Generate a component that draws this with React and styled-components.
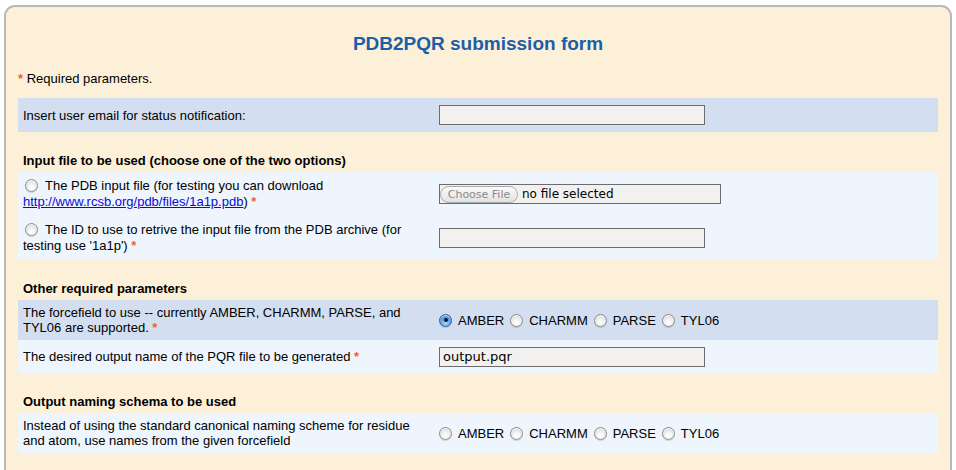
import React from 'react'
import styled, { createGlobalStyle } from 'styled-components'

const Global = createGlobalStyle`
    html, body {
        margin: 0;
        padding: 0;
        background: #ffffff;
    }
    body {
        font-family: "Liberation Sans", Arial, sans-serif;
        font-size: 13px;
        color: #000;
    }
`

const Panel = styled.div`
    box-sizing: border-box;
    width: 948px;
    min-height: 480px;
    margin: 5px 0 0 4px;
    padding: 26px 12px 20px 12px;
    background: #fcf1d8;
    border: 2px solid #b9b9b9;
    border-radius: 11px;
`

const Title = styled.h1`
    margin: 0;
    text-align: center;
    color: #1c5ea8;
    font-size: 19px;
    line-height: 22px;
    font-weight: bold;
`

const Note = styled.div`
    margin: 16px 0 12px 0;
    line-height: 15px;
`

const Star = styled.span`
    color: #f0622a;
    font-weight: bold;
`

const SectionHead = styled.div`
    padding: 21px 5px 4px 5px;
    font-weight: bold;
    line-height: 15px;
`

const Row = styled.div`
    display: grid;
    grid-template-columns: 416px 1fr;
    align-items: center;
    min-height: ${p => p.$h}px;
    background: ${p => (p.$dark ? '#d3dff0' : '#eef5fd')};
`

const Label = styled.div`
    padding: 0 5px;
    line-height: ${p => (p.$lh ? p.$lh : 15)}px;
`

const Field = styled.div`
    padding: 0 5px;
    display: flex;
    align-items: center;
`

const TextInput = styled.input`
    box-sizing: border-box;
    width: ${p => p.$w || 266}px;
    height: 20px;
    margin: 0;
    padding: 1px 3px;
    border: 1px solid #6c6c6c;
    background: #f2f1ef;
    font-family: "DejaVu Sans", sans-serif;
    font-size: 13px;
    color: #000;
    outline: none;
`

const FileBox = styled.div`
    box-sizing: border-box;
    width: 282px;
    height: 20px;
    border: 1px solid #6c6c6c;
    background: #f2f1ef;
    display: flex;
    align-items: center;
    gap: 4px;
    font-family: "DejaVu Sans", sans-serif;
    font-size: 12px;
`

const FileButton = styled.span`
    box-sizing: border-box;
    height: 17px;
    width: 78px;
    border: 1px solid #aaa;
    border-radius: 9px;
    background: linear-gradient(#fbfbfb, #e2e2e2);
    color: #8a8a8a;
    font-size: 11px;
    display: flex;
    align-items: center;
    justify-content: center;
`

const Radio = styled.input.attrs({ type: 'radio' })`
    appearance: none;
    -webkit-appearance: none;
    box-sizing: border-box;
    width: 13px;
    height: 13px;
    margin: ${p => p.$m || '0 6px 0 0'};
    border-radius: 50%;
    border: 1px solid #8e8e8e;
    background: radial-gradient(circle at 50% 70%, #ffffff 0%, #f4f4f4 35%, #c9c9c9 100%);
    box-shadow: inset 0 1px 1px rgba(255, 255, 255, 0.9), 0 1px 1px rgba(0, 0, 0, 0.15);
    vertical-align: -2px;
    position: relative;

    &:checked {
        border-color: #2d5f9e;
        background: radial-gradient(circle at 50% 75%, #a8dcff 0%, #5aa6ee 45%, #1f63c4 100%);
    }
    &:checked::after {
        content: '';
        position: absolute;
        left: 3.5px;
        top: 3.5px;
        width: 4px;
        height: 4px;
        border-radius: 50%;
        background: #111;
    }
`

const Choices = styled.div`
    display: flex;
    align-items: center;
`

const Choice = styled.label`
    display: inline-flex;
    align-items: center;
    margin-right: 6px;
`

const Link = styled.a`
    color: #0b0bd8;
    text-decoration: underline;
`

const forcefields = ['AMBER', 'CHARMM', 'PARSE', 'TYL06']

const ForcefieldChoices = ({ name, selected }) => (
    <Choices>
        {forcefields.map(ff => (
            <Choice key={ff}>
                <Radio name={name} defaultChecked={ff === selected} />
                {ff}
            </Choice>
        ))}
    </Choices>
)

const App = () => {
    return (
        <>
            <Global />
            <Panel>
                <Title>PDB2PQR submission form</Title>
                <Note><Star>*</Star> Required parameters.</Note>

                <Row $dark $h={34}>
                    <Label>Insert user email for status notification:</Label>
                    <Field><TextInput /></Field>
                </Row>

                <SectionHead>Input file to be used (choose one of the two options)</SectionHead>
                <Row $h={44}>
                    <Label $lh={16}>
                        <Radio name="src" $m="0 7px 0 2px" />The PDB input file (for testing you can download{' '}
                        <Link href="#">http://www.rcsb.org/pdb/files/1a1p.pdb</Link>) <Star>*</Star>
                    </Label>
                    <Field>
                        <FileBox>
                            <FileButton>Choose File</FileButton>
                            no file selected
                        </FileBox>
                    </Field>
                </Row>
                <Row $h={44}>
                    <Label $lh={16}>
                        <Radio name="src" $m="0 7px 0 2px" />The ID to use to retrive the input file from the PDB archive (for testing use '1a1p') <Star>*</Star>
                    </Label>
                    <Field><TextInput /></Field>
                </Row>

                <SectionHead>Other required parameters</SectionHead>
                <Row $dark $h={40}>
                    <Label>The forcefield to use -- currently AMBER, CHARMM, PARSE, and TYL06 are supported. <Star>*</Star></Label>
                    <Field><ForcefieldChoices name="ff" selected="AMBER" /></Field>
                </Row>
                <Row $h={33}>
                    <Label>The desired output name of the PQR file to be generated <Star>*</Star></Label>
                    <Field><TextInput defaultValue="output.pqr" /></Field>
                </Row>

                <SectionHead>Output naming schema to be used</SectionHead>
                <Row $h={40}>
                    <Label>Instead of using the standard canonical naming scheme for residue and atom, use names from the given forcefield</Label>
                    <Field><ForcefieldChoices name="names" /></Field>
                </Row>
            </Panel>
        </>
    )
}

export default App
